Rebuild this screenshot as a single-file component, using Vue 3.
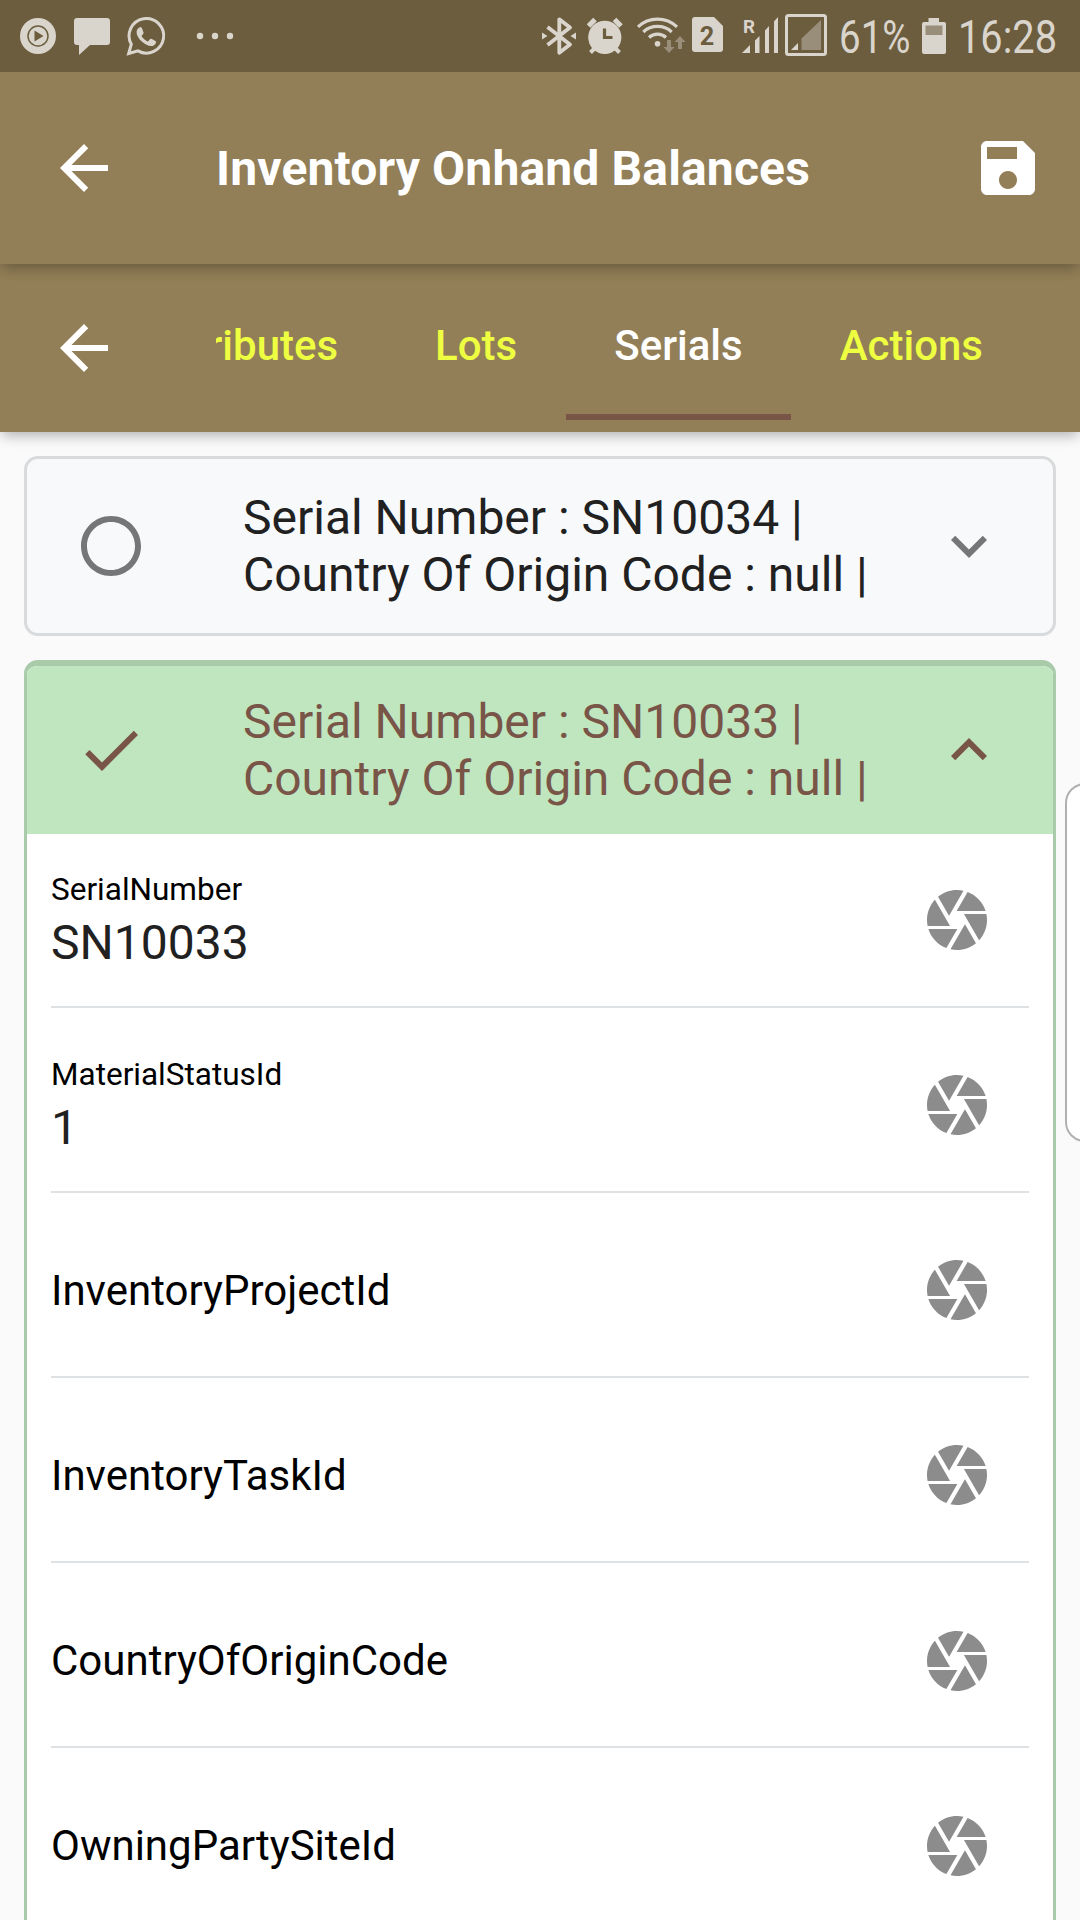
<script setup>
const backPath = 'M20 11H7.83l5.59-5.59L12 4l-8 8 8 8 1.41-1.41L7.83 13H20v-2z'
const cameraPath =
  'M9.4 10.5l4.77-8.26C13.47 2.09 12.75 2 12 2c-2.4 0-4.6.85-6.32 2.25l3.66 6.35.06-.1zM21.54 9c-.92-2.92-3.15-5.26-6-6.34L11.88 9h9.66zm.26 1h-7.49l.29.5 4.76 8.25C21 16.97 22 14.61 22 12c0-.69-.07-1.35-.2-2zM8.54 12l-3.9-6.75C3.01 7.03 2 9.39 2 12c0 .69.07 1.35.2 2h7.49l-1.15-2zm-6.08 3c.92 2.92 3.15 5.26 6 6.34L12.12 15H2.46zm11.27 0l-3.9 6.76c.7.15 1.42.24 2.17.24 2.4 0 4.6-.85 6.32-2.25l-3.66-6.35-.93 1.6z'

const tabs = [
  { name: 'Attributes' },
  { name: 'Lots' },
  { name: 'Serials', active: true },
  { name: 'Actions' },
]

const serials = [
  { number: 'SN10034', open: false },
  { number: 'SN10033', open: true },
]

const fields = [
  { label: 'SerialNumber', value: 'SN10033' },
  { label: 'MaterialStatusId', value: '1' },
  { label: 'InventoryProjectId' },
  { label: 'InventoryTaskId' },
  { label: 'CountryOfOriginCode' },
  { label: 'OwningPartySiteId' },
]
</script>

<template>
  <div class="screen">
    <div class="status">
      <svg class="notifications" viewBox="0 0 260 72" width="260" height="72">
        <circle cx="38" cy="36" r="18" />
        <circle class="cut-line" cx="38" cy="36" r="10" stroke-width="1.5" />
        <path class="cut" d="M34.5 30.5v11l9-5.5z" />
        <path d="M77 18h30a3 3 0 0 1 3 3v21a3 3 0 0 1-3 3H90L79 55V45h-2a3 3 0 0 1-3-3V21a3 3 0 0 1 3-3z" />
        <path class="line" stroke-width="3" d="M128.7 53.5l2.6-9.2a17.3 17.3 0 1 1 6.6 6.6z" />
        <path d="M140.2 27.2c-.8 0-3.6 1.5-3.6 5.1 0 6.3 9 13.8 14.5 13.8 3.2 0 5-2.5 5-4.3 0-.8-4.6-3-5.4-3-1 0-1.9 2.7-2.9 2.7-1.3 0-6.1-4-6.1-5.4 0-1 1.9-2 1.9-3 0-.7-1.7-5.5-2.4-5.8z" />
        <circle cx="200" cy="36" r="3.2" />
        <circle cx="215" cy="36" r="3.2" />
        <circle cx="230" cy="36" r="3.2" />
      </svg>
      <svg viewBox="536 0 544 72" width="544" height="72">
        <path class="line" stroke-width="3.8" stroke-linejoin="round" d="M547.5 27L570 44.5 559.3 52.7V19.3L570 27.5 547.5 45" />
        <path d="M542 32.5v7l5.5-3.5zM576 32.5v7l-5.5-3.5z" />
        <circle cx="604.8" cy="37.3" r="16.6" />
        <path class="line" stroke-width="5" d="M588.5 26l6.5-6.5M614.5 19.5l6.5 6.5" />
        <path class="line" stroke-width="4" d="M590.5 52.5l5-5M619.5 52.5l-5-5" />
        <path class="cut-line" stroke-width="3.2" d="M604.5 28.5v9h8" />
        <circle cx="657.5" cy="43.7" r="2.8" />
        <path class="line" stroke-width="3.2" d="M638 26.8a28.5 28.5 0 0 1 39 0M643.3 32a21 21 0 0 1 28.4 0M649 37.5a12.5 12.5 0 0 1 17 0" />
        <path class="dim" d="M667 40h4v7h3.5l-5.5 6-5.5-6h3.5zM678 49h4v-7h3.5l-5.5-6-5.5 6h3.5z" />
        <path d="M695 17h19l9 9v23a3 3 0 0 1-3 3h-25a3 3 0 0 1-3-3V20a3 3 0 0 1 3-3z" />
        <text class="sim" x="699.7" y="45" font-size="26" textLength="14.5" lengthAdjust="spacingAndGlyphs">2</text>
        <text class="bold" x="743" y="33" font-size="18" textLength="12" lengthAdjust="spacingAndGlyphs">R</text>
        <path d="M742 53h8v-8zM755 53h4.5V36l-4.5 4.5zM765 53h4V26l-4 4.5zM774 53h4V17l-4 4.5z" />
        <rect class="line" x="786.5" y="15.5" width="39" height="39" rx="2" stroke-width="3" />
        <path d="M791 50h7v-7z" />
        <path class="dim" d="M801.5 50h19.5V20l-19.5 18.5z" />
        <text x="839" y="53" font-size="46" textLength="71.5" lengthAdjust="spacingAndGlyphs">61%</text>
        <path d="M928.5 22v-4h10.5v4h5a2 2 0 0 1 2 2v28a2 2 0 0 1-2 2h-20a2 2 0 0 1-2-2V24a2 2 0 0 1 2-2z" />
        <path class="dim" d="M925.5 25.5h17v9.5h-17z" />
        <text x="958" y="53" font-size="46" textLength="99" lengthAdjust="spacingAndGlyphs">16:28</text>
      </svg>
    </div>

    <header class="bar title-bar">
      <svg class="icon" viewBox="0 0 24 24"><path :d="backPath" /></svg>
      <h1>Inventory Onhand Balances</h1>
      <svg class="icon" viewBox="0 0 24 24">
        <path d="M17 3H5c-1.11 0-2 .9-2 2v14c0 1.1.89 2 2 2h14c1.1 0 2-.9 2-2V7l-4-4zm-5 16c-1.66 0-3-1.34-3-3s1.34-3 3-3 3 1.34 3 3-1.34 3-3 3zm3-10H5V5h10v4z" />
      </svg>
    </header>

    <nav class="bar tab-bar">
      <svg class="icon" viewBox="0 0 24 24"><path :d="backPath" /></svg>
      <div class="tabs">
        <div class="strip">
          <span v-for="tab in tabs" :key="tab.name" class="tab" :class="{ active: tab.active }">{{ tab.name }}</span>
        </div>
      </div>
    </nav>

    <main class="content">
      <section v-for="serial in serials" :key="serial.number" class="card" :class="{ open: serial.open }">
        <div class="card-head">
          <svg class="icon" viewBox="0 0 24 24">
            <path v-if="serial.open" d="M9 16.17L4.83 12l-1.42 1.41L9 19 21 7l-1.41-1.41z" />
            <path v-else d="M12 2C6.48 2 2 6.48 2 12s4.48 10 10 10 10-4.48 10-10S17.52 2 12 2zm0 18c-4.42 0-8-3.58-8-8s3.58-8 8-8 8 3.58 8 8-3.58 8-8 8z" />
          </svg>
          <div class="summary">
            <div>Serial Number : {{ serial.number }} |</div>
            <div>Country Of Origin Code : null |</div>
          </div>
          <svg class="icon" viewBox="0 0 24 24">
            <path v-if="serial.open" d="M12 8l-6 6 1.41 1.41L12 10.83l4.59 4.58L18 14z" />
            <path v-else d="M16.59 8.59L12 13.17 7.41 8.59 6 10l6 6 6-6z" />
          </svg>
        </div>
        <div v-if="serial.open" class="fields">
          <div v-for="field in fields" :key="field.label" class="field">
            <div class="field-text">
              <div :class="field.value ? 'label' : 'placeholder'">{{ field.label }}</div>
              <div v-if="field.value" class="value">{{ field.value }}</div>
            </div>
            <svg class="icon" viewBox="0 0 24 24"><path :d="cameraPath" /></svg>
          </div>
        </div>
      </section>
    </main>
    <div class="edge-handle"></div>
  </div>
</template>

<style>
body {
  margin: 0;
  overflow: hidden;
}
</style>

<style scoped>
.screen {
  position: relative;
  display: flex;
  flex-direction: column;
  width: 1080px;
  height: 1920px;
  overflow: hidden;
  background: #fafafa;
  font-family: Roboto, sans-serif;
}
.screen * {
  box-sizing: border-box;
}
.icon {
  width: 72px;
  height: 72px;
  flex: none;
  fill: currentColor;
}
.status {
  position: relative;
  z-index: 3;
  display: flex;
  justify-content: space-between;
  flex: none;
  height: 72px;
  background: #6c5d3f;
  fill: #dad5cc;
}
.status .line {
  fill: none;
  stroke: #dad5cc;
}
.status .cut,
.status .sim {
  fill: #6c5d3f;
}
.status .cut-line {
  fill: none;
  stroke: #6c5d3f;
}
.status .dim {
  fill: #998e7a;
}
.status .sim,
.status .bold {
  font-weight: 700;
}
.bar {
  position: relative;
  display: flex;
  align-items: center;
  flex: none;
  background: #927e57;
  color: #fff;
  box-shadow: 0 6px 12px -3px rgba(0, 0, 0, 0.2), 0 3px 15px rgba(0, 0, 0, 0.13);
}
.title-bar {
  z-index: 2;
  height: 192px;
  padding: 0 36px 0 48px;
}
h1 {
  flex: 1;
  margin: 2px 0 0 96px;
  font-size: 48px;
  line-height: 60px;
  font-weight: 700;
  letter-spacing: 0.15px;
  white-space: nowrap;
}
.tab-bar {
  z-index: 1;
  height: 168px;
  padding-left: 48px;
}
.tabs {
  display: flex;
  flex: 1;
  height: 144px;
  margin-left: 96px;
  overflow: hidden;
}
.strip {
  display: flex;
  gap: 1px;
  margin-left: -112px;
}
.tab {
  flex: none;
  height: 144px;
  padding: 0 48px;
  border-bottom: 6px solid transparent;
  color: #eeff41;
  font-size: 42px;
  line-height: 139px;
  font-weight: 500;
}
.tab.active {
  color: #fff;
  border-bottom-color: #795548;
}
.content {
  display: flex;
  flex-direction: column;
  gap: 24px;
  padding: 24px;
}
.card {
  flex: none;
  overflow: hidden;
  border: 3px solid #d8dadc;
  border-radius: 14px;
  background: #f8f9fb;
  color: #212121;
}
.card.open {
  height: 1300px;
  border-color: #a9cbaa;
  border-top-width: 6px;
  background: #fff;
  color: #795548;
}
.card-head {
  position: relative;
  display: flex;
  align-items: center;
  height: 174px;
  padding: 0 48px;
}
.card-head .icon {
  color: #757678;
}
.open .card-head {
  height: 168px;
  background: #c0e6c0;
}
.open .card-head .icon {
  color: #795548;
}
.summary {
  flex: 1;
  margin-left: 96px;
  font-size: 48px;
  line-height: 57px;
  white-space: nowrap;
}
.fields {
  margin-top: -11.5px;
  padding: 0 24px;
}
.field {
  display: flex;
  align-items: center;
  justify-content: space-between;
  height: 185.15px;
  padding: 12px 36px 0 0;
  border-bottom: 2px solid #dee2e4;
}
.field .icon {
  color: #8c8c8c;
}
.label {
  padding-top: 2px;
  color: #000;
  font-size: 31.5px;
  line-height: 42px;
}
.value {
  margin-top: 2px;
  color: #212121;
  font-size: 48px;
  line-height: 60px;
}
.placeholder {
  padding-top: 1px;
  color: #000;
  font-size: 42px;
  line-height: 50px;
}
.edge-handle {
  position: absolute;
  top: 783px;
  right: -30px;
  width: 45px;
  height: 359px;
  box-sizing: border-box;
  border: 2px solid #b0b0b0;
  border-radius: 20px;
  background: #fff;
}
</style>
